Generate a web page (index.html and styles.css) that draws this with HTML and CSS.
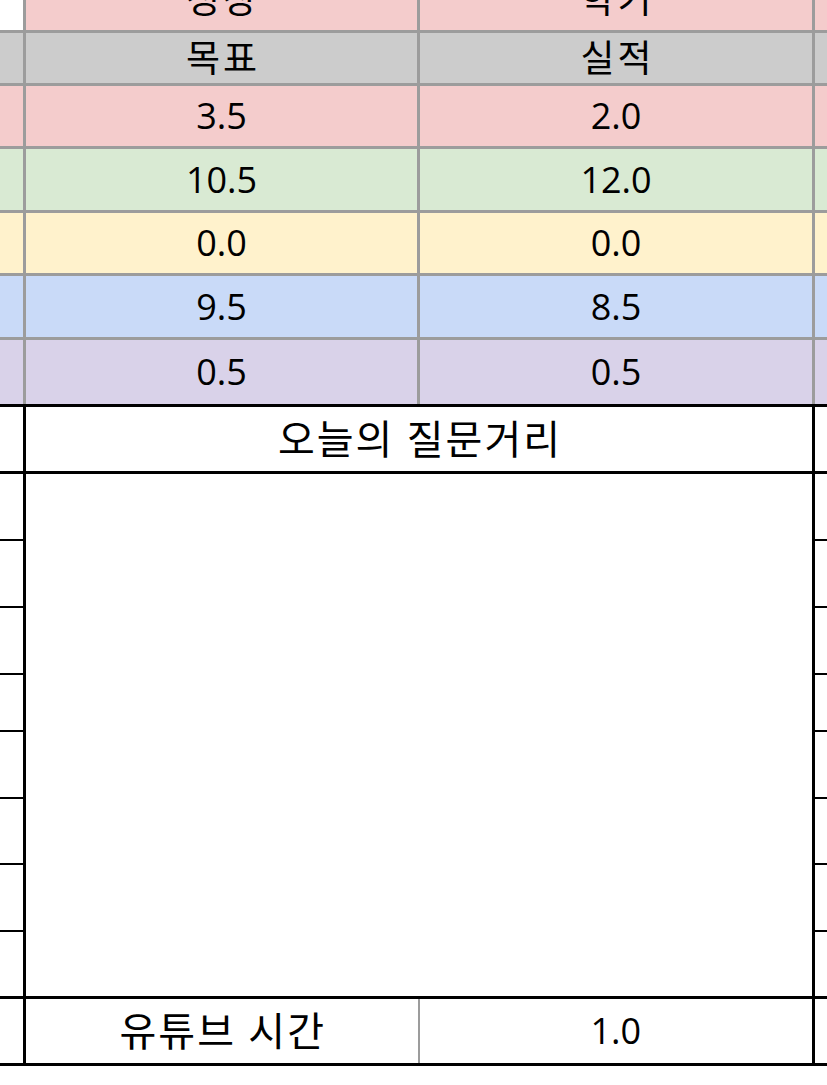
FILE: index.html
```html
<!DOCTYPE html>
<html lang="ko">
<head>
<meta charset="utf-8">
<title>Sheet</title>
<link rel="stylesheet" href="styles.css">
</head>
<body>
<table class="sheet">
  <colgroup>
    <col class="c-left">
    <col class="c-a">
    <col class="c-b">
    <col class="c-right">
  </colgroup>
  <tr class="r-top">
    <td class="blank"></td><td class="pink ko-head">성장</td><td class="pink ko-head">학기</td><td class="pink"></td>
  </tr>
  <tr class="r-head gray">
    <td></td><td class="ko-head">목표</td><td class="ko-head">실적</td><td></td>
  </tr>
  <tr class="r-val pink"><td></td><td>3.5</td><td>2.0</td><td></td></tr>
  <tr class="r-val2 green"><td></td><td>10.5</td><td>12.0</td><td></td></tr>
  <tr class="r-val yellow"><td></td><td>0.0</td><td>0.0</td><td></td></tr>
  <tr class="r-val2 blue"><td></td><td>9.5</td><td>8.5</td><td></td></tr>
  <tr class="r-last purple"><td></td><td>0.5</td><td>0.5</td><td></td></tr>
  <tr class="r-title dark"><td></td><td colspan="2" class="ko">오늘의 질문거리</td><td></td></tr>
  <tr class="q h67 dark"><td class="side"></td><td colspan="2" rowspan="8" class="notes"></td><td class="side"></td></tr>
  <tr class="q h67 dark"><td class="side"></td><td class="side"></td></tr>
  <tr class="q h67 dark"><td class="side"></td><td class="side"></td></tr>
  <tr class="q h57 dark"><td class="side"></td><td class="side"></td></tr>
  <tr class="q h67 dark"><td class="side"></td><td class="side"></td></tr>
  <tr class="q h66 dark"><td class="side"></td><td class="side"></td></tr>
  <tr class="q h67 dark"><td class="side"></td><td class="side"></td></tr>
  <tr class="q h67 dark"><td class="side"></td><td class="side"></td></tr>
  <tr class="r-yt dark"><td></td><td class="ko yt-label">유튜브 시간</td><td class="yt-value">1.0</td><td></td></tr>
</table>
</body>
</html>
```

FILE: styles.css
```css
html, body {
  margin: 0;
  padding: 0;
  background: #ffffff;
  overflow: hidden;
}

body {
  width: 827px;
  height: 1085px;
}

.sheet {
  border-collapse: collapse;
  table-layout: fixed;
  width: 873.5px;
  margin-top: -32px;
  font-family: "Open Sans", "Noto Sans CJK KR", sans-serif;
  font-size: 36px;
  line-height: 1.2;
  color: #000;
}

.c-left { width: 24.5px; }
.c-a { width: 394px; }
.c-b { width: 395px; }
.c-right { width: 60px; }

.sheet td {
  box-sizing: border-box;
  padding: 0;
  text-align: center;
  vertical-align: middle;
  border: 3px solid #9c9c9c;
  white-space: nowrap;
  overflow: hidden;
}

.sheet td:first-child { border-left: 0; }

.ko-head {
  font-size: 37px;
  letter-spacing: 3px;
  text-indent: 3px;
}

.ko {
  font-size: 40px;
  letter-spacing: 2px;
  text-indent: 2px;
}

/* rows */
.r-top td { height: 63px; border-top: 0; }
.r-head td { height: 53.5px; }
.r-val td { height: 63px; }
.r-val2 td { height: 64px; }
.r-last td { height: 67px; border-bottom-color: #000; }
.r-title td { height: 67px; }
.h67 td { height: 67px; }
.h66 td { height: 66px; }
.h57 td { height: 57px; }
.r-yt td { height: 67px; }

/* fills */
.pink td, td.pink { background: #f4cccc; }
.r-top td.blank { background: #ffffff; }
.gray td { background: #cccccc; }
.green td { background: #d9ead3; }
.yellow td { background: #fff2cc; }
.blue td { background: #c9daf8; }
.purple td { background: #d9d2e9; }

/* black bordered block */
.dark td {
  background: #ffffff;
  border-color: #000;
}

.q td.side {
  border-top-width: 2px;
  border-bottom-width: 2px;
}

.r-yt td.yt-label { border-right: 2px solid #9c9c9c; }
.r-yt td.yt-value { border-left: 2px solid #9c9c9c; }
```
